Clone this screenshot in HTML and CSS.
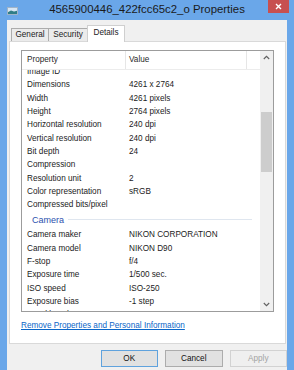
FILE: index.html
```html
<!DOCTYPE html>
<html>
<head>
<meta charset="utf-8">
<link rel="stylesheet" href="styles.css">
</head>
<body>
<div class="window">
  <div class="titlebar">
    <div class="tb-left">
      <svg class="app-icon" width="11" height="8" viewBox="0 0 11 8">
        <rect x="0.5" y="0.5" width="10" height="7" fill="#eef4fb" stroke="#9fb3c8"/>
        <rect x="1" y="1" width="9" height="3" fill="#d6e6f5"/>
        <path d="M1 5 L4 3.6 L7 4.6 L10 3.8 L10 7 L1 7 Z" fill="#2f7d86"/>
      </svg>
    </div>
    <div class="title">4565900446_422fcc65c2_o Properties</div>
    <div class="tb-right">
      <div class="close">
        <svg width="7" height="7" viewBox="0 0 7 7"><path d="M1 1 L6 6 M6 1 L1 6" stroke="#fff" stroke-width="1.4"/></svg>
      </div>
    </div>
  </div>
  <div class="client">
    <div class="tabs">
      <div class="tab t-general">General</div>
      <div class="tab t-security">Security</div>
      <div class="tab t-details active">Details</div>
    </div>
    <div class="panel">
      <div class="listbox">
        <div class="list">
          <div class="header">
            <div class="hcell c1">Property</div>
            <div class="hcell c2">Value</div>
            <div class="hcell c3"></div>
          </div>
          <div class="body">
            <div class="rows">
              <div class="row"><span>Image ID</span><span></span></div>
              <div class="row"><span>Dimensions</span><span>4261 x 2764</span></div>
              <div class="row"><span>Width</span><span>4261 pixels</span></div>
              <div class="row"><span>Height</span><span>2764 pixels</span></div>
              <div class="row"><span>Horizontal resolution</span><span>240 dpi</span></div>
              <div class="row"><span>Vertical resolution</span><span>240 dpi</span></div>
              <div class="row"><span>Bit depth</span><span>24</span></div>
              <div class="row"><span>Compression</span><span></span></div>
              <div class="row"><span>Resolution unit</span><span>2</span></div>
              <div class="row"><span>Color representation</span><span>sRGB</span></div>
              <div class="row"><span>Compressed bits/pixel</span><span></span></div>
              <div class="group"><span class="gname">Camera</span><i class="rule"></i></div>
              <div class="row"><span>Camera maker</span><span>NIKON CORPORATION</span></div>
              <div class="row"><span>Camera model</span><span>NIKON D90</span></div>
              <div class="row"><span>F-stop</span><span>f/4</span></div>
              <div class="row"><span>Exposure time</span><span>1/500 sec.</span></div>
              <div class="row"><span>ISO speed</span><span>ISO-250</span></div>
              <div class="row"><span>Exposure bias</span><span>-1 step</span></div>
              <div class="row"><span>Focal length</span><span>18 mm</span></div>
            </div>
          </div>
        </div>
        <div class="scrollbar">
          <div class="arrow">
            <svg width="7" height="5" viewBox="0 0 7 5"><path d="M0.8 4 L3.5 1.3 L6.2 4" fill="none" stroke="#606060" stroke-width="1.1"/></svg>
          </div>
          <div class="track"><div class="thumb"></div></div>
          <div class="arrow">
            <svg width="7" height="5" viewBox="0 0 7 5"><path d="M0.8 1 L3.5 3.7 L6.2 1" fill="none" stroke="#606060" stroke-width="1.1"/></svg>
          </div>
        </div>
      </div>
      <a class="link" href="#">Remove Properties and Personal Information</a>
    </div>
    <div class="buttons">
      <button class="btn default">OK</button>
      <button class="btn">Cancel</button>
      <button class="btn disabled">Apply</button>
    </div>
  </div>
</div>
</body>
</html>
```
FILE: styles.css
```css
html, body {
  margin: 0;
  padding: 0;
}
body {
  width: 294px;
  height: 370px;
  overflow: hidden;
  font-family: "Liberation Sans", Arial, sans-serif;
  font-size: 8.2px;
  color: #1b1b1b;
}
.window {
  height: 370px;
  background: #6aa7e9;
  display: flex;
  flex-direction: column;
}
.titlebar {
  height: 20px;
  display: grid;
  grid-template-columns: 1fr auto 1fr;
  align-items: start;
}
.tb-left {
  padding: 7px 0 0 7px;
  line-height: 0;
}
.title {
  font-size: 11.4px;
  line-height: 19px;
  color: #1a1a1a;
  white-space: nowrap;
}
.tb-right {
  display: flex;
  justify-content: flex-end;
  padding-right: 5px;
}
.close {
  width: 21px;
  height: 13px;
  background: #c75050;
  display: flex;
  align-items: center;
  justify-content: center;
}
.close svg { display: block; }

.client {
  flex: 1;
  margin: 0 7px;
  background: #f0f0f0;
  display: flex;
  flex-direction: column;
}
.tabs {
  height: 22px;
  margin-bottom: -1px;
  padding-left: 4px;
  display: flex;
  align-items: flex-end;
  position: relative;
  z-index: 1;
}
.tab {
  height: 13px;
  margin-bottom: 1px;
  box-sizing: border-box;
  border: 1px solid #acacac;
  border-bottom: none;
  border-left: none;
  background: #ebebeb;
  line-height: 11px;
  text-align: center;
  white-space: nowrap;
}
.t-general { width: 38px; border-left: 1px solid #acacac; }
.t-security { width: 39px; }
.t-details { width: 38px; }
.tab.active {
  height: 17px;
  margin-bottom: 0;
  margin-left: -1px;
  border: 1px solid #cfcfcf;
  border-bottom: none;
  background: #fff;
  line-height: 14px;
}

.panel {
  height: 303px;
  box-sizing: border-box;
  margin: 0 1px 0 2px;
  border: 1px solid #d9d9d9;
  background: #fff;
  padding: 8px 11px 0 11px;
}
.listbox {
  height: 262px;
  box-sizing: border-box;
  border: 1px solid #9c9c9c;
  display: flex;
}
.list {
  flex: 1;
  min-width: 0;
  display: flex;
  flex-direction: column;
}
.header {
  height: 19px;
  box-sizing: border-box;
  border-bottom: 1px solid #ececec;
  display: grid;
  grid-template-columns: 104px 121px 1fr;
}
.hcell {
  line-height: 18px;
  color: #2a2a2a;
  white-space: nowrap;
}
.hcell.c1 { padding-left: 5px; border-right: 1px solid #e6e6e6; }
.hcell.c2 { padding-left: 3px; border-right: 1px solid #e6e6e6; }
.body {
  flex: 1;
  overflow: hidden;
}
.rows {
  margin-top: -5px;
}
.row {
  display: grid;
  grid-template-columns: 104px 1fr;
  line-height: 13.333px;
  white-space: nowrap;
}
.row span:first-child { padding-left: 5px; }
.row span:last-child { padding-left: 3px; }
.group {
  height: 16.667px;
  display: flex;
  align-items: center;
  padding-left: 10px;
  margin-right: 8px;
}
.gname {
  font-size: 9px;
  color: #2b4fae;
}
.rule {
  flex: 1;
  height: 1px;
  margin-left: 4px;
  background: #dfe6ef;
}
.scrollbar {
  width: 13px;
  background: #f0f0f0;
  display: flex;
  flex-direction: column;
}
.arrow {
  height: 13px;
  display: flex;
  align-items: center;
  justify-content: center;
}
.arrow svg { display: block; }
.track {
  flex: 1;
  padding-top: 47.7px;
}
.thumb {
  height: 60.6px;
  margin: 0 1px;
  background: #cdcdcd;
}
.link {
  display: block;
  width: max-content;
  margin-top: 7.3px;
  line-height: 13.333px;
  color: #0a66c8;
  text-decoration: underline;
}
.buttons {
  margin-top: 6px;
  display: flex;
  justify-content: flex-end;
  gap: 7px;
}
.btn {
  width: 57.5px;
  height: 17px;
  box-sizing: border-box;
  padding: 0;
  border: 1px solid #acacac;
  background: #e1e1e1;
  font-family: inherit;
  font-size: 8.2px;
  color: #111;
}
.btn.default { border-color: #5fa2dd; }
.btn.disabled {
  border-color: #d2d2d2;
  background: #efefef;
  color: #a3a3a3;
}
```
